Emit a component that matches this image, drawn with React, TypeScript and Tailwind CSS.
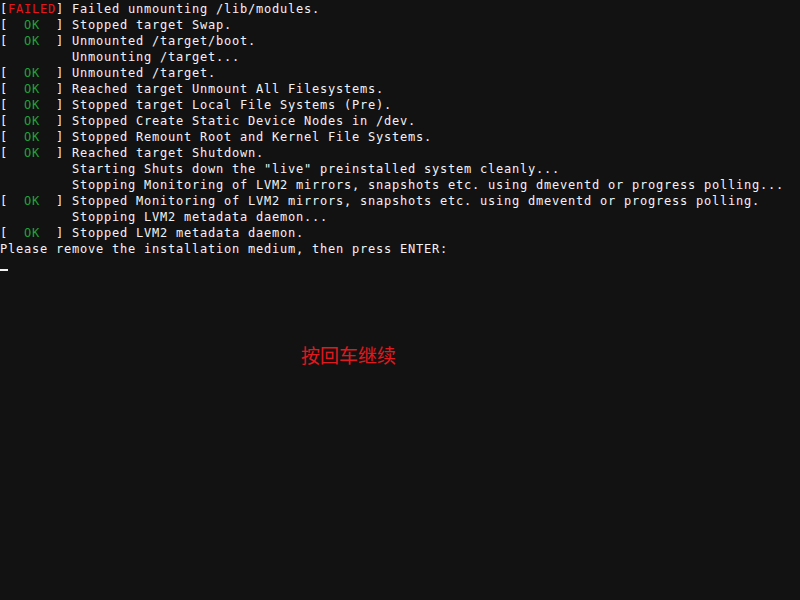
import React from "react";

type Line = { s?: "ok" | "failed"; t: string; indent?: boolean; plain?: boolean };

const lines: Line[] = [
  { s: "failed", t: "Failed unmounting /lib/modules." },
  { s: "ok", t: "Stopped target Swap." },
  { s: "ok", t: "Unmounted /target/boot." },
  { indent: true, t: "Unmounting /target..." },
  { s: "ok", t: "Unmounted /target." },
  { s: "ok", t: "Reached target Unmount All Filesystems." },
  { s: "ok", t: "Stopped target Local File Systems (Pre)." },
  { s: "ok", t: "Stopped Create Static Device Nodes in /dev." },
  { s: "ok", t: "Stopped Remount Root and Kernel File Systems." },
  { s: "ok", t: "Reached target Shutdown." },
  { indent: true, t: 'Starting Shuts down the "live" preinstalled system cleanly...' },
  { indent: true, t: "Stopping Monitoring of LVM2 mirrors, snapshots etc. using dmeventd or progress polling..." },
  { s: "ok", t: "Stopped Monitoring of LVM2 mirrors, snapshots etc. using dmeventd or progress polling." },
  { indent: true, t: "Stopping LVM2 metadata daemon..." },
  { s: "ok", t: "Stopped LVM2 metadata daemon." },
  { plain: true, t: "Please remove the installation medium, then press ENTER:" },
];

export default function App() {
  return (
    <div
      className="relative w-[800px] h-[600px] bg-[#121212] text-[#f2f2f2] overflow-hidden"
      style={{ fontFamily: '"DejaVu Sans Mono", "Liberation Mono", monospace' }}
    >
      <div className="flex flex-col text-[12px] tracking-[0.776px] leading-[16px] whitespace-pre pt-[1px]">
        {lines.map((l, i) => (
          <div key={i} className="h-4">
            {l.plain ? (
              l.t
            ) : l.indent ? (
              <>{"         " + l.t}</>
            ) : l.s === "failed" ? (
              <>
                [<span className="text-[#e8161b]">FAILED</span>] {l.t}
              </>
            ) : (
              <>
                [  <span className="text-[#21a33a]">OK</span>  ] {l.t}
              </>
            )}
          </div>
        ))}
      </div>
      <div className="w-2 h-[2px] bg-[#f2f2f2] mt-[12px]" />
      <div
        className="absolute left-[301px] top-[345px] text-[19px] leading-[19px] text-[#e0191f]"
        style={{ fontFamily: '"Noto Sans CJK SC", sans-serif' }}
      >
        按回车继续
      </div>
    </div>
  );
}
